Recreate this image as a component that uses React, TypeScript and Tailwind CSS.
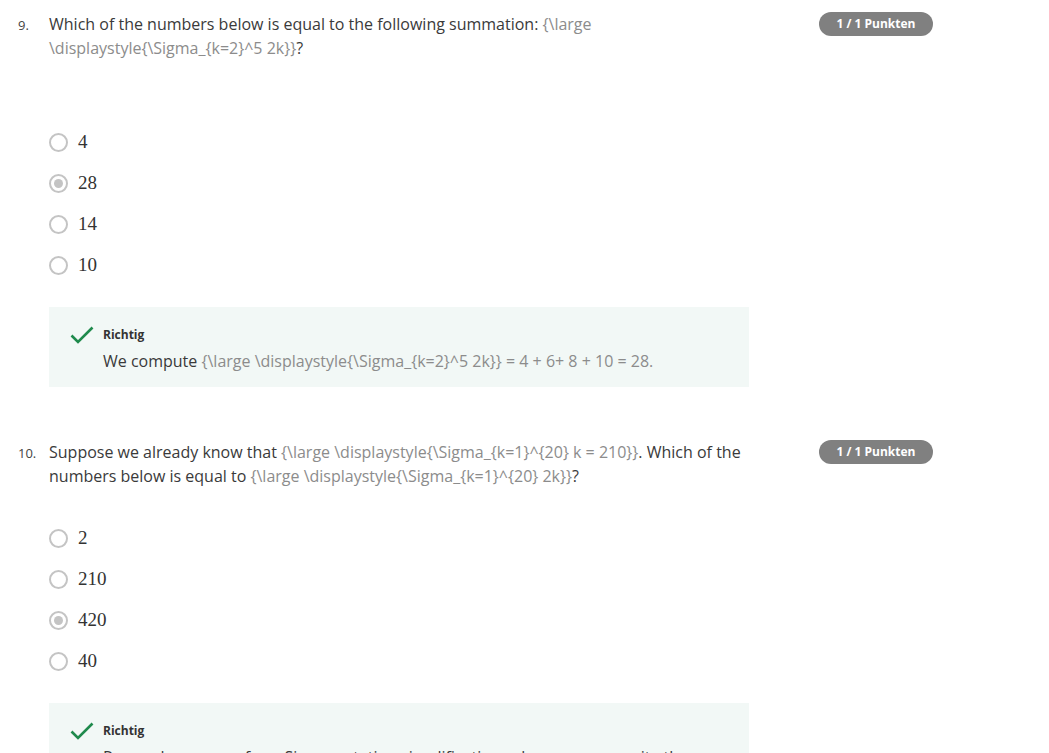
import React from 'react';

type Part = { t: string; tex?: boolean };

interface Question {
  num: string;
  parts: Part[];
  options: string[];
  selected: number;
  gapTop: string;
  explanation: Part[];
}

const questions: Question[] = [
  {
    num: '9.',
    parts: [
      { t: 'Which of the numbers below is equal to the following summation: ' },
      { t: '{\\large \\displaystyle{\\Sigma_{k=2}^5 2k}}', tex: true },
      { t: '?' },
    ],
    options: ['4', '28', '14', '10'],
    selected: 1,
    gapTop: 'mt-[62px]',
    explanation: [
      { t: 'We compute ' },
      { t: '{\\large \\displaystyle{\\Sigma_{k=2}^5 2k}} = 4 + 6+ 8 + 10 = 28.', tex: true },
    ],
  },
  {
    num: '10.',
    parts: [
      { t: 'Suppose we already know that ' },
      { t: '{\\large \\displaystyle{\\Sigma_{k=1}^{20} k = 210}}', tex: true },
      { t: '. Which of the numbers below is equal to ' },
      { t: '{\\large \\displaystyle{\\Sigma_{k=1}^{20} 2k}}', tex: true },
      { t: '?' },
    ],
    options: ['2', '210', '420', '40'],
    selected: 2,
    gapTop: 'mt-[30px]',
    explanation: [
      { t: 'Remember some of our Sigma notation simplification rules: we can rewrite the sum' },
    ],
  },
];

const Rich = ({ parts }: { parts: Part[] }) => (
  <>
    {parts.map((p, i) =>
      p.tex ? (
        <span key={i} className="text-[#8c8c8c]">{p.t}</span>
      ) : (
        <span key={i}>{p.t}</span>
      )
    )}
  </>
);

const Radio = ({ checked }: { checked: boolean }) => (
  <span className="flex h-[19px] w-[19px] items-center justify-center rounded-full border-2 border-[#c4c4c4] bg-white">
    {checked && <span className="h-[9px] w-[9px] rounded-full bg-[#c4c4c4]" />}
  </span>
);

const Check = () => (
  <svg width="24" height="18" viewBox="0 0 24 18" fill="none">
    <path d="M1.5 9.5 L8 16 L22.5 1.5" stroke="#1f8a4c" strokeWidth="2.6" />
  </svg>
);

const QuestionBlock = ({ q }: { q: Question }) => (
  <div className="flex">
    <div className="w-[31px] pt-[3px] text-[13px] leading-[20px] text-[#444]">{q.num}</div>
    <div className="w-[712px]">
      <p className="text-[16px] leading-[24px] text-[#3a3a3a]">
        <Rich parts={q.parts} />
      </p>
      <div className={`${q.gapTop} flex flex-col`}>
        {q.options.map((o, i) => (
          <label key={i} className="flex h-[41px] items-center gap-[10px]">
            <Radio checked={i === q.selected} />
            <span className="font-['Liberation_Serif',serif] text-[19px] text-[#333]">{o}</span>
          </label>
        ))}
      </div>
      <div className="mt-[21px] w-[700px] bg-[#f2f8f6] pb-[14px] pl-[21px] pr-6 pt-[18px]">
        <div className="flex items-center gap-[9px]">
          <Check />
          <span className="text-[12px] font-bold leading-[20px] text-[#333]">Richtig</span>
        </div>
        <p className="mt-1 pl-[33px] text-[16px] leading-[24px] text-[#3a3a3a]">
          <Rich parts={q.explanation} />
        </p>
      </div>
    </div>
    <div className="ml-[58px]">
      <span className="flex h-[24px] w-[114px] items-center justify-center rounded-full bg-[#808080] text-[12px] font-bold text-white">
        1 / 1 Punkten
      </span>
    </div>
  </div>
);

export default function App() {
  return (
    <div className="h-[753px] overflow-hidden bg-white pl-[18px] pt-3 font-['Open_Sans',sans-serif]">
      <QuestionBlock q={questions[0]} />
      <div className="mt-[53px]">
        <QuestionBlock q={questions[1]} />
      </div>
    </div>
  );
}
